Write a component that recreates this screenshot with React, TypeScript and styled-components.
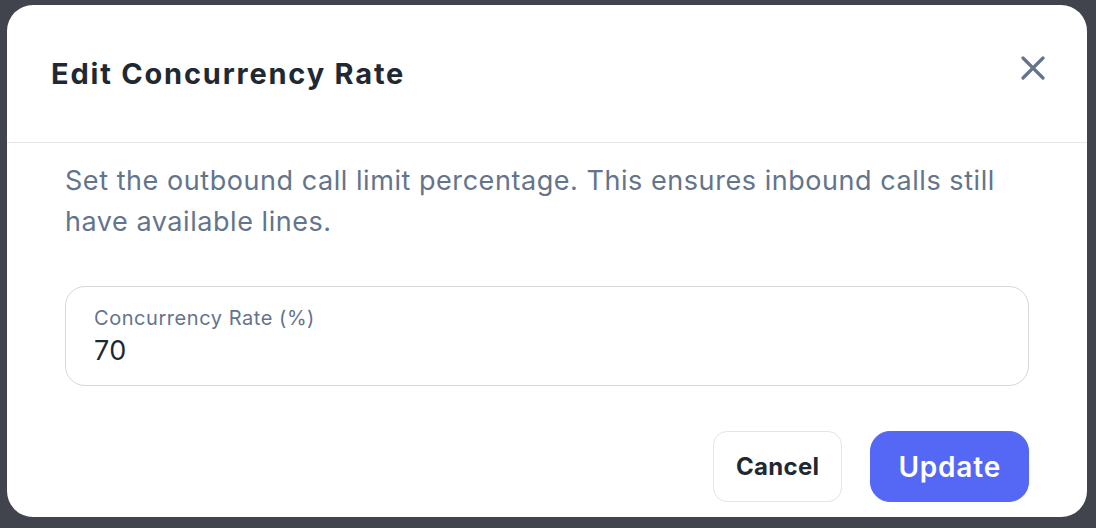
import styled, { createGlobalStyle } from "styled-components";

const GlobalStyle = createGlobalStyle`
  * {
    box-sizing: border-box;
  }

  html,
  body {
    margin: 0;
    padding: 0;
    background: #41444c;
    font-family: Inter, "Noto Sans", sans-serif;
  }
`;

function CloseIcon() {
  return (
    <svg width="24" height="24" viewBox="0 0 24 24" fill="none">
      <path
        d="M2 2L22 22M22 2L2 22"
        stroke="#64748b"
        strokeWidth="3.2"
        strokeLinecap="round"
      />
    </svg>
  );
}

export default function App() {
  return (
    <>
      <GlobalStyle />
      <Backdrop>
        <Modal role="dialog" aria-labelledby="modal-title">
          <Header>
            <h2 className="title" id="modal-title">
              Edit Concurrency Rate
            </h2>
            <button type="button" className="button__close" aria-label="Close">
              <CloseIcon />
            </button>
          </Header>

          <Body>
            <p className="description">
              Set the outbound call limit percentage. This ensures inbound calls
              still have available lines.
            </p>

            <Field>
              <label htmlFor="rate">Concurrency Rate (%)</label>
              <input id="rate" type="text" defaultValue="70" />
            </Field>

            <Actions>
              <Button type="button">Cancel</Button>
              <Button type="button" $primary>
                Update
              </Button>
            </Actions>
          </Body>
        </Modal>
      </Backdrop>
    </>
  );
}

const Backdrop = styled.div`
  width: 1096px;
  height: 528px;
  padding: 5px 9px 11px 7px;
  background: #41444c;
`;

const Modal = styled.section`
  width: 1080px;
  height: 512px;
  background: #ffffff;
  border-radius: 26px;
  overflow: hidden;
  display: flex;
  flex-direction: column;
`;

const Header = styled.header`
  height: 138px;
  display: flex;
  align-items: center;
  justify-content: space-between;
  padding: 0 41px 0 44px;
  border-bottom: 1px solid #e6e8eb;

  .title {
    margin: 0;
    font-size: 29px;
    font-weight: 700;
    letter-spacing: 1.8px;
    color: #1f2933;
  }

  .button__close {
    display: flex;
    align-items: center;
    justify-content: center;
    width: 26px;
    height: 26px;
    padding: 0;
    margin-top: -12px;
    border: none;
    background: none;
    cursor: pointer;
  }
`;

const Body = styled.div`
  flex: 1;
  display: flex;
  flex-direction: column;
  padding: 17px 58px 0;

  .description {
    margin: 0;
    font-size: 27px;
    line-height: 41px;
    letter-spacing: 0.55px;
    color: #64748b;
  }
`;

const Field = styled.div`
  margin-top: 44px;
  height: 100px;
  display: flex;
  flex-direction: column;
  justify-content: center;
  padding: 0 28px;
  border: 1px solid #d4d7db;
  border-radius: 20px;

  label {
    font-size: 20px;
    line-height: 26px;
    letter-spacing: 0.55px;
    color: #64748b;
  }

  input {
    margin-top: 4px;
    padding: 0;
    border: none;
    outline: none;
    background: transparent;
    font-family: inherit;
    font-size: 27px;
    line-height: 32px;
    letter-spacing: 0.5px;
    color: #1f2933;
  }
`;

const Actions = styled.div`
  margin-top: 45px;
  display: flex;
  justify-content: flex-end;
  gap: 28px;
`;

const Button = styled.button<{ $primary?: boolean }>`
  height: 71px;
  padding: 0 ${(p) => (p.$primary ? "27px" : "22px")};
  border-radius: ${(p) => (p.$primary ? "20px" : "14px")};
  border: 1px solid ${(p) => (p.$primary ? "#5467f5" : "#e2e4e8")};
  background: ${(p) => (p.$primary ? "#5467f5" : "#ffffff")};
  color: ${(p) => (p.$primary ? "#ffffff" : "#1f2933")};
  font-family: inherit;
  font-size: ${(p) => (p.$primary ? "28px" : "24px")};
  font-weight: ${(p) => (p.$primary ? 600 : 700)};
  letter-spacing: ${(p) => (p.$primary ? "0.8px" : "0.3px")};
  cursor: pointer;
`;
